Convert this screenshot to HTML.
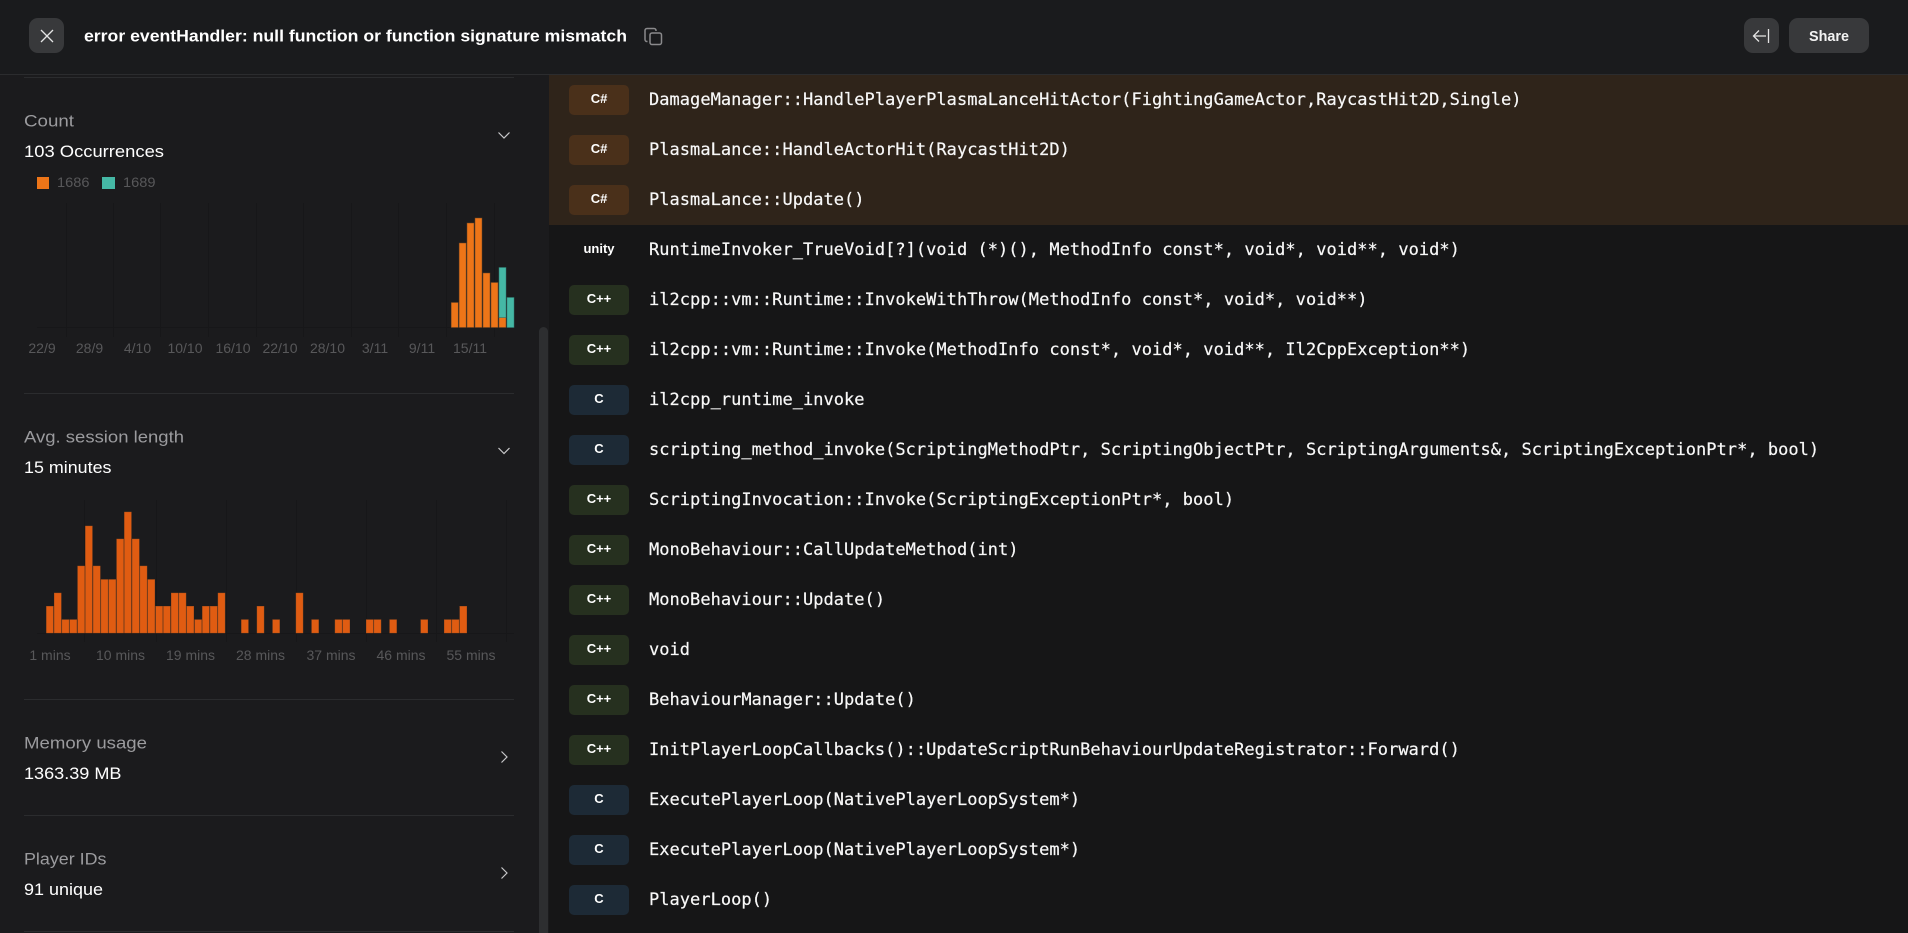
<!DOCTYPE html>
<html lang="en"><head><meta charset="utf-8"><title>error eventHandler</title>
<style>
html,body{margin:0;padding:0;width:1908px;height:933px;overflow:hidden;background:#161617}
svg{display:block}
.s{font-family:"Liberation Sans",sans-serif}
.lab{font-size:16.500px;fill:#9b9b9e}
.val{font-size:16.500px;fill:#fff}
.ax{font-size:14px;fill:#58585a;text-anchor:middle}
.m{font-family:"DejaVu Sans Mono","Liberation Mono",monospace;font-size:17px;letter-spacing:.03px;fill:#f8f8f8;stroke:#f8f8f8;stroke-width:.2px}
.b{font-family:"Liberation Sans",sans-serif;font-size:13px;font-weight:700;fill:#fff;text-anchor:middle}
</style></head><body>
<svg width="1908" height="933" viewBox="0 0 1908 933" xmlns="http://www.w3.org/2000/svg">
<rect width="1908" height="933" fill="#161617"/>
<!-- sidebar -->
<rect x="0" y="75" width="549" height="858" fill="#1b1b1d"/>
<rect x="24" y="77" width="490" height="1" fill="#2b2c2e"/>
<rect x="24" y="393" width="490" height="1" fill="#2b2c2e"/>
<rect x="24" y="699" width="490" height="1" fill="#2b2c2e"/>
<rect x="24" y="815" width="490" height="1" fill="#2b2c2e"/>
<rect x="24" y="931" width="490" height="1" fill="#2b2c2e"/>
<path d="M539 331.500a4.500 4.500 0 0 1 9 0V933H539Z" fill="#2d2e30"/>

<text class="s lab" x="24" y="126.500" textLength="50" lengthAdjust="spacingAndGlyphs">Count</text>
<text class="s val" x="24" y="157" textLength="140" lengthAdjust="spacingAndGlyphs">103 Occurrences</text>
<path d="M498.500 132.500L504 138L509.500 132.500" fill="none" stroke="#c8c8ca" stroke-width="1.200"/>
<rect x="37" y="177" width="12" height="12" fill="#ED7518"/>
<text class="s" x="57" y="187" font-size="14" fill="#58585a" textLength="32.500" lengthAdjust="spacingAndGlyphs">1686</text>
<rect x="102" y="177" width="13" height="12" fill="#45B8A5"/>
<text class="s" x="123" y="187" font-size="14" fill="#58585a" textLength="32.500" lengthAdjust="spacingAndGlyphs">1689</text>

<g fill="#171719">
<rect x="37" y="327" width="477" height="1"/>
<rect x="66" y="203" width="1" height="134"/><rect x="113" y="203" width="1" height="134"/><rect x="160" y="203" width="1" height="134"/><rect x="208" y="203" width="1" height="134"/><rect x="256" y="203" width="1" height="134"/><rect x="303" y="203" width="1" height="134"/><rect x="351" y="203" width="1" height="134"/><rect x="398" y="203" width="1" height="134"/><rect x="446" y="203" width="1" height="134"/><rect x="494" y="203" width="1" height="134"/>
</g>
<g fill="#ED7518" stroke="#6b4424" stroke-width=".5">
<rect x="451.200" y="302.500" width="7" height="25"/>
<rect x="459.100" y="243" width="7" height="84.500"/>
<rect x="467" y="223" width="7" height="104.500"/>
<rect x="475" y="218" width="7" height="109.500"/>
<rect x="483" y="273" width="7" height="54.500"/>
<rect x="491" y="282.500" width="7" height="45"/>
<rect x="499" y="317.500" width="7" height="10"/>
</g>
<g fill="#45B8A5" stroke="#2f7a70" stroke-width=".5">
<rect x="499" y="267.500" width="7" height="50"/>
<rect x="507" y="297.500" width="7" height="30"/>
</g>
<g class="s">
<text class="ax" x="42" y="353">22/9</text><text class="ax" x="89.500" y="353">28/9</text><text class="ax" x="137.500" y="353">4/10</text><text class="ax" x="185" y="353">10/10</text><text class="ax" x="233" y="353">16/10</text><text class="ax" x="280" y="353">22/10</text><text class="ax" x="327.500" y="353">28/10</text><text class="ax" x="375" y="353">3/11</text><text class="ax" x="422" y="353">9/11</text><text class="ax" x="470" y="353">15/11</text>
</g>

<text class="s lab" x="24" y="442.500" textLength="160" lengthAdjust="spacingAndGlyphs">Avg. session length</text>
<text class="s val" x="24" y="473" textLength="87.500" lengthAdjust="spacingAndGlyphs">15 minutes</text>
<path d="M498.500 448L504 453.500L509.500 448" fill="none" stroke="#c8c8ca" stroke-width="1.200"/>
<g fill="#171719">
<rect x="37" y="633" width="477" height="1"/>
<rect x="84" y="500" width="1" height="142"/><rect x="156" y="500" width="1" height="142"/><rect x="226" y="500" width="1" height="142"/><rect x="296" y="500" width="1" height="142"/><rect x="366" y="500" width="1" height="142"/><rect x="436" y="500" width="1" height="142"/><rect x="506" y="500" width="1" height="142"/>
</g>
<g fill="#E05C12" stroke="#a8501c" stroke-width=".4">
<rect x="46.400" y="606.300" width="7" height="26.700"/><rect x="54.200" y="593" width="7" height="40"/><rect x="62" y="619.600" width="7" height="13.400"/><rect x="69.800" y="619.600" width="7" height="13.400"/><rect x="77.600" y="566" width="7" height="67"/><rect x="85.400" y="526" width="7" height="107"/><rect x="93.200" y="566" width="7" height="67"/><rect x="101" y="579.500" width="7" height="53.500"/><rect x="108.800" y="579.500" width="7" height="53.500"/><rect x="116.600" y="539" width="7" height="94"/><rect x="124.400" y="512" width="7" height="121"/><rect x="132.200" y="539" width="7" height="94"/><rect x="140" y="566" width="7" height="67"/><rect x="147.800" y="579.500" width="7" height="53.500"/><rect x="155.600" y="606.300" width="7" height="26.700"/><rect x="163.400" y="606.300" width="7" height="26.700"/><rect x="171.200" y="593" width="7" height="40"/><rect x="179" y="593" width="7" height="40"/><rect x="186.800" y="606.300" width="7" height="26.700"/><rect x="194.600" y="619.600" width="7" height="13.400"/><rect x="202.400" y="606.300" width="7" height="26.700"/><rect x="210.200" y="606.300" width="7" height="26.700"/><rect x="218" y="593" width="7" height="40"/><rect x="241.400" y="619.600" width="7" height="13.400"/><rect x="257" y="606.300" width="7" height="26.700"/><rect x="272.600" y="619.600" width="7" height="13.400"/><rect x="296" y="593" width="7" height="40"/><rect x="311.600" y="619.600" width="7" height="13.400"/><rect x="335" y="619.600" width="7" height="13.400"/><rect x="342.800" y="619.600" width="7" height="13.400"/><rect x="366.200" y="619.600" width="7" height="13.400"/><rect x="374" y="619.600" width="7" height="13.400"/><rect x="389.600" y="619.600" width="7" height="13.400"/><rect x="420.800" y="619.600" width="7" height="13.400"/><rect x="444.200" y="619.600" width="7" height="13.400"/><rect x="452" y="619.600" width="7" height="13.400"/><rect x="459.800" y="606.300" width="7" height="26.700"/>
</g>
<g class="s">
<text class="ax" x="50" y="660">1 mins</text><text class="ax" x="120.500" y="660">10 mins</text><text class="ax" x="190.500" y="660">19 mins</text><text class="ax" x="260.500" y="660">28 mins</text><text class="ax" x="331" y="660">37 mins</text><text class="ax" x="401" y="660">46 mins</text><text class="ax" x="471" y="660">55 mins</text>
</g>

<text class="s lab" x="24" y="748.500" textLength="123" lengthAdjust="spacingAndGlyphs">Memory usage</text>
<text class="s val" x="24" y="779" textLength="97.500" lengthAdjust="spacingAndGlyphs">1363.39 MB</text>
<path d="M501.500 751.500L507 757L501.500 762.500" fill="none" stroke="#c8c8ca" stroke-width="1.200"/>
<text class="s lab" x="24" y="864.500" textLength="82.500" lengthAdjust="spacingAndGlyphs">Player IDs</text>
<text class="s val" x="24" y="895" textLength="79" lengthAdjust="spacingAndGlyphs">91 unique</text>
<path d="M501.500 867.500L507 873L501.500 878.500" fill="none" stroke="#c8c8ca" stroke-width="1.200"/>

<!-- stack -->
<rect x="549" y="75" width="1359" height="150" fill="#2f241a"/>
<g fill="#4a301a">
<rect x="569" y="85" width="60" height="30" rx="5"/><rect x="569" y="135" width="60" height="30" rx="5"/><rect x="569" y="185" width="60" height="30" rx="5"/>
</g>
<g fill="#26301f">
<rect x="569" y="285" width="60" height="30" rx="5"/><rect x="569" y="335" width="60" height="30" rx="5"/><rect x="569" y="485" width="60" height="30" rx="5"/><rect x="569" y="535" width="60" height="30" rx="5"/><rect x="569" y="585" width="60" height="30" rx="5"/><rect x="569" y="635" width="60" height="30" rx="5"/><rect x="569" y="685" width="60" height="30" rx="5"/><rect x="569" y="735" width="60" height="30" rx="5"/>
</g>
<g fill="#1d2a36">
<rect x="569" y="385" width="60" height="30" rx="5"/><rect x="569" y="435" width="60" height="30" rx="5"/><rect x="569" y="785" width="60" height="30" rx="5"/><rect x="569" y="835" width="60" height="30" rx="5"/><rect x="569" y="885" width="60" height="30" rx="5"/>
</g>
<text class="b" x="599" y="103">C#</text><text class="b" x="599" y="153">C#</text><text class="b" x="599" y="203">C#</text><text class="b" x="599" y="253">unity</text><text class="b" x="599" y="303">C++</text><text class="b" x="599" y="353">C++</text><text class="b" x="599" y="403">C</text><text class="b" x="599" y="453">C</text><text class="b" x="599" y="503">C++</text><text class="b" x="599" y="553">C++</text><text class="b" x="599" y="603">C++</text><text class="b" x="599" y="653">C++</text><text class="b" x="599" y="703">C++</text><text class="b" x="599" y="753">C++</text><text class="b" x="599" y="803">C</text><text class="b" x="599" y="853">C</text><text class="b" x="599" y="903">C</text>
<text class="m" x="649" y="105">DamageManager::HandlePlayerPlasmaLanceHitActor(FightingGameActor,RaycastHit2D,Single)</text>
<text class="m" x="649" y="155">PlasmaLance::HandleActorHit(RaycastHit2D)</text>
<text class="m" x="649" y="205">PlasmaLance::Update()</text>
<text class="m" x="649" y="255">RuntimeInvoker_TrueVoid[?](void (*)(), MethodInfo const*, void*, void**, void*)</text>
<text class="m" x="649" y="305">il2cpp::vm::Runtime::InvokeWithThrow(MethodInfo const*, void*, void**)</text>
<text class="m" x="649" y="355">il2cpp::vm::Runtime::Invoke(MethodInfo const*, void*, void**, Il2CppException**)</text>
<text class="m" x="649" y="405">il2cpp_runtime_invoke</text>
<text class="m" x="649" y="455">scripting_method_invoke(ScriptingMethodPtr, ScriptingObjectPtr, ScriptingArguments&amp;, ScriptingExceptionPtr*, bool)</text>
<text class="m" x="649" y="505">ScriptingInvocation::Invoke(ScriptingExceptionPtr*, bool)</text>
<text class="m" x="649" y="555">MonoBehaviour::CallUpdateMethod(int)</text>
<text class="m" x="649" y="605">MonoBehaviour::Update()</text>
<text class="m" x="649" y="655">void</text>
<text class="m" x="649" y="705">BehaviourManager::Update()</text>
<text class="m" x="649" y="755">InitPlayerLoopCallbacks()::UpdateScriptRunBehaviourUpdateRegistrator::Forward()</text>
<text class="m" x="649" y="805">ExecutePlayerLoop(NativePlayerLoopSystem*)</text>
<text class="m" x="649" y="855">ExecutePlayerLoop(NativePlayerLoopSystem*)</text>
<text class="m" x="649" y="905">PlayerLoop()</text>

<!-- header -->
<rect x="0" y="0" width="1908" height="74" fill="#1a1b1d"/>
<rect x="0" y="74" width="1908" height="1" fill="#2b2c2e"/>
<rect x="29" y="18" width="35" height="35" rx="9" fill="#38393b"/>
<path d="M41 30L53 42M53 30L41 42" stroke="#e4e4e4" stroke-width="1.300" fill="none"/>
<text class="s" x="84" y="41.500" font-size="16.500" font-weight="700" fill="#fff" textLength="543" lengthAdjust="spacingAndGlyphs">error eventHandler: null function or function signature mismatch</text>
<g fill="none" stroke="#8a8a8c" stroke-width="1.500">
<rect x="650" y="33" width="11.500" height="11.500" rx="2"/>
<path d="M647.500 41.500h-.5a2 2 0 0 1-2-2v-9a2 2 0 0 1 2-2h7a2 2 0 0 1 2 2v.5"/>
</g>
<rect x="1744" y="18" width="35" height="35" rx="9" fill="#38393b"/>
<path d="M1766 36H1753.500M1759 30.500L1753.500 36L1759 41.500M1768.500 29V43" stroke="#e4e4e4" stroke-width="1.300" fill="none"/>
<rect x="1789" y="18" width="80" height="35" rx="9" fill="#38393b"/>
<text class="s" x="1809" y="41" font-size="14.500" font-weight="700" fill="#f2f2f2" textLength="40" lengthAdjust="spacingAndGlyphs">Share</text>
</svg>
</body></html>
